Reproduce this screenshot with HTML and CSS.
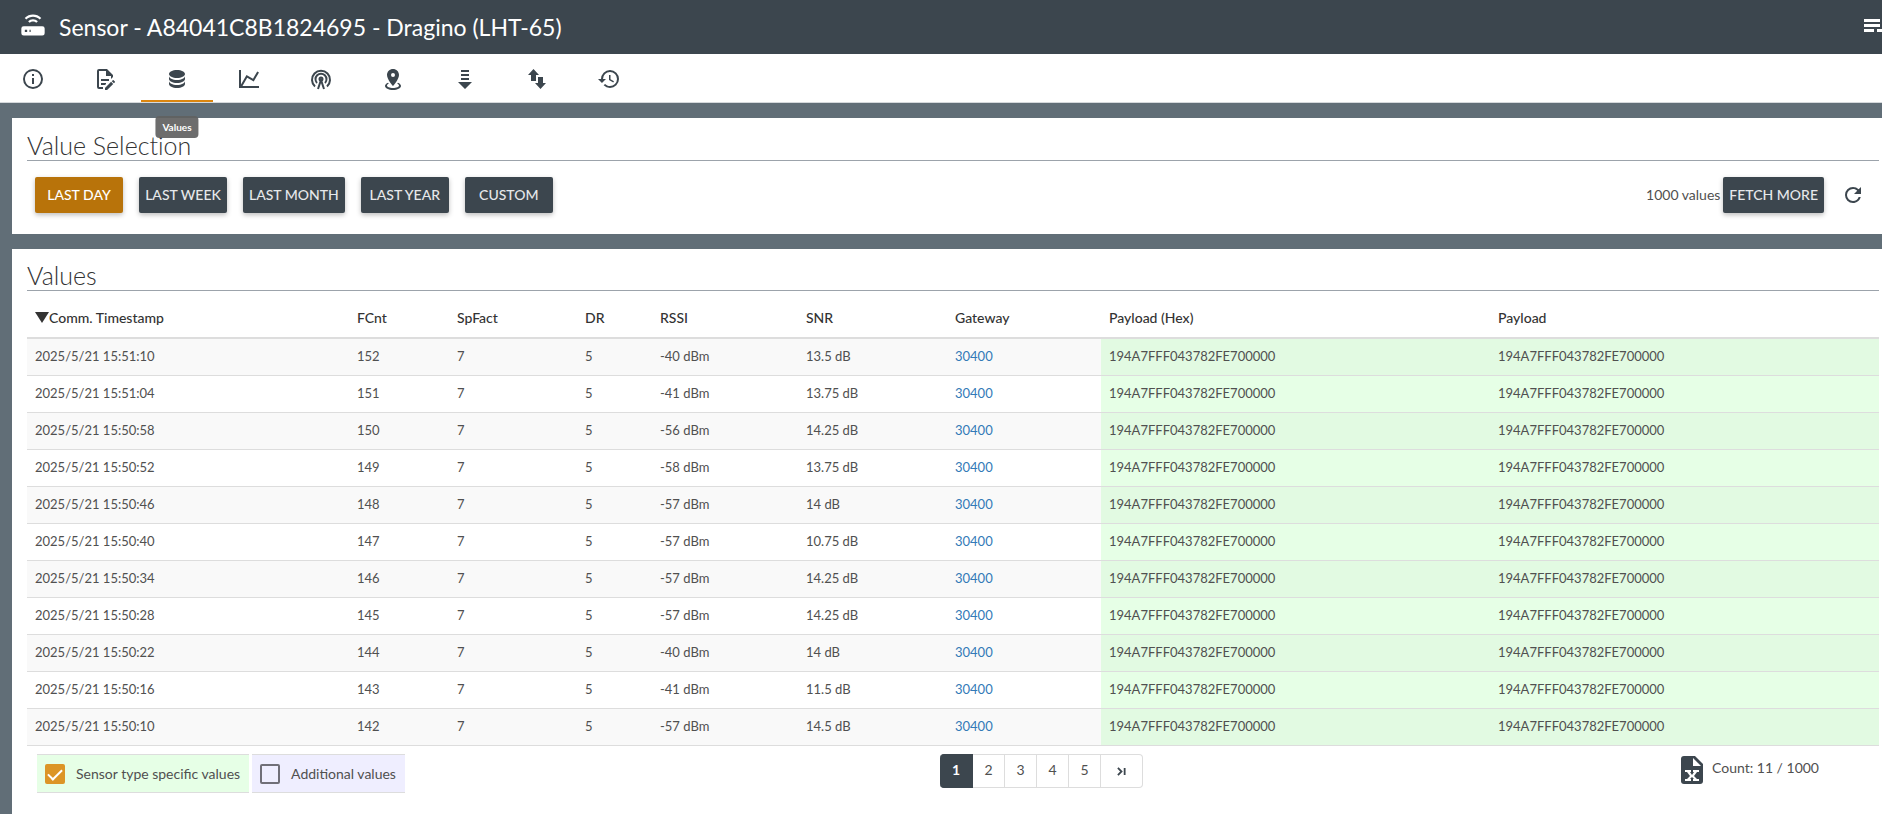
FILE: index.html
```html
<!DOCTYPE html>
<html lang="en">
<head>
<meta charset="utf-8">
<title>Sensor - A84041C8B1824695</title>
<link rel="stylesheet" href="styles.css">
</head>
<body>
<header class="topbar">
  <svg class="icon topbar-icon" viewBox="0 0 24 24"><path d="M4 13h16a2 2 0 0 1 2 2v4a2 2 0 0 1-2 2H4a2 2 0 0 1-2-2v-4a2 2 0 0 1 2-2m1 3v2h2v-2H5m4 0v2h1v-2H9M4.900 5.900C8.800 2 15.200 2 19.100 5.900l-1.400 1.400c-3.100-3.100-8.300-3.100-11.400 0L4.900 5.900m2.900 2.800c2.300-2.300 6.100-2.300 8.400 0l-1.400 1.400c-1.500-1.500-4.100-1.500-5.600 0L7.800 8.700z"/></svg>
  <h1 class="topbar-title">Sensor - A84041C8B1824695 - Dragino (LHT-65)</h1>
  <button class="topbar-menu" aria-label="Menu"><svg class="menu-icon" viewBox="0 0 18 14"><path d="M0 0h16v3H0zM0 5h16v3H0zM0 10h10v3H0zM13 10h5v3h-5z"/></svg></button>
</header>
<nav class="tabs">
  <button class="tab" aria-label="Info"><svg class="icon" viewBox="0 0 24 24"><path d="M11 9h2V7h-2m1 13c-4.410 0-8-3.590-8-8s3.590-8 8-8 8 3.590 8 8-3.590 8-8 8m0-18A10 10 0 0 0 2 12a10 10 0 0 0 10 10 10 10 0 0 0 10-10A10 10 0 0 0 12 2m-1 15h2v-6h-2v6z"/></svg></button>
  <button class="tab" aria-label="Edit"><svg class="icon" viewBox="0 0 24 24"><path d="M8 12h8v2H8v-2m2 8H6V4h7v5h5v3.100l2-2V8l-6-6H6a2 2 0 0 0-2 2v16a2 2 0 0 0 2 2h4v-2m-2-2h4.100l.9-.9V16H8v2m12.200-5c.1 0 .3.100.4.200l1.300 1.300c.2.200.2.600 0 .8l-1 1-2.100-2.100 1-1c.1-.1.200-.2.400-.2m0 3.900L14.100 23H12v-2.100l6.100-6.100 2.100 2.100z"/></svg></button>
  <button class="tab tab-active" aria-label="Values"><svg class="icon" viewBox="0 0 24 24"><path d="M12 3C7.580 3 4 4.790 4 7s3.580 4 8 4 8-1.790 8-4-3.580-4-8-4M4 9v3c0 2.210 3.580 4 8 4s8-1.790 8-4V9c0 2.210-3.580 4-8 4s-8-1.790-8-4m0 5v3c0 2.210 3.580 4 8 4s8-1.790 8-4v-3c0 2.210-3.580 4-8 4s-8-1.790-8-4z"/></svg><span class="tooltip">Values</span></button>
  <button class="tab" aria-label="Chart"><svg class="icon" viewBox="0 0 24 24"><path d="M16 11.780l4.240-7.330 1.730 1-5.230 9.050-6.510-3.750L5.460 19H22v2H2V3h2v14.540L9.500 8z"/></svg></button>
  <button class="tab" aria-label="Antenna"><svg class="icon icon-line" viewBox="0 0 24 24"><path d="M6 19.500a9 9 0 1 1 12 0M8 16a5.500 5.500 0 1 1 8 0M9 22l3-9 3 9"/><circle cx="12" cy="12" r="1.500"/></svg></button>
  <button class="tab" aria-label="Location"><svg class="icon" viewBox="0 0 24 24"><path d="M12 2c3.310 0 6 2.660 6 5.950C18 12.410 12 19 12 19S6 12.410 6 7.950C6 4.660 8.690 2 12 2m0 4a2 2 0 0 0-2 2 2 2 0 0 0 2 2 2 2 0 0 0 2-2 2 2 0 0 0-2-2m8 13c0 2.210-3.580 4-8 4s-8-1.790-8-4c0-1.290 1.220-2.440 3.110-3.170l.64.910C6.670 17.190 6 17.810 6 18.500c0 1.380 2.690 2.500 6 2.500s6-1.120 6-2.500c0-.69-.67-1.310-1.750-1.760l.64-.91C18.780 16.560 20 17.710 20 19z"/></svg></button>
  <button class="tab" aria-label="Downlink"><svg class="icon" viewBox="0 0 24 24"><path d="M8 3h8v2H8zM8 7h8v2H8zM8 11h8v2H8zM5 15h14l-7 7z"/></svg></button>
  <button class="tab" aria-label="Transfers"><svg class="icon" viewBox="0 0 24 24"><path d="M8.500 2l5.500 6h-3v6H6V8H3zM15.500 22L10 16h3v-6h5v6h3z"/></svg></button>
  <button class="tab" aria-label="History"><svg class="icon" viewBox="0 0 24 24"><path d="M13.500 8H12v5l4.280 2.540.72-1.210-3.500-2.080V8M13 3a9 9 0 0 0-9 9H1l3.960 4.030L9 12H6a7 7 0 0 1 7-7 7 7 0 0 1 7 7 7 7 0 0 1-7 7c-1.930 0-3.680-.79-4.940-2.060l-1.420 1.420A8.896 8.896 0 0 0 13 21a9 9 0 0 0 9-9 9 9 0 0 0-9-9"/></svg></button>
</nav>
<main class="content">
  <section class="panel">
    <h2 class="panel-title">Value Selection</h2>
    <div class="selection">
      <button class="btn btn-active">LAST DAY</button>
      <button class="btn">LAST WEEK</button>
      <button class="btn">LAST MONTH</button>
      <button class="btn">LAST YEAR</button>
      <button class="btn">CUSTOM</button>
      <div class="fetch">
        <span>1000 values</span>
        <button class="btn">FETCH MORE</button>
        <button class="refresh" aria-label="Refresh"><svg class="icon" viewBox="0 0 24 24"><path d="M17.650 6.350A7.958 7.958 0 0 0 12 4a8 8 0 0 0-8 8 8 8 0 0 0 8 8c3.730 0 6.840-2.550 7.730-6h-2.080A5.990 5.990 0 0 1 12 18a6 6 0 0 1-6-6 6 6 0 0 1 6-6c1.660 0 3.140.69 4.220 1.780L13 11h7V4l-2.350 2.350z"/></svg></button>
      </div>
    </div>
  </section>
  <section class="panel panel-values">
    <h2 class="panel-title">Values</h2>
    <table class="values">
      <colgroup><col class="c-time"><col class="c-fcnt"><col class="c-sf"><col class="c-dr"><col class="c-rssi"><col class="c-snr"><col class="c-gw"><col><col></colgroup>
      <thead><tr><th><span class="sort"></span>Comm. Timestamp</th><th>FCnt</th><th>SpFact</th><th>DR</th><th>RSSI</th><th>SNR</th><th>Gateway</th><th>Payload (Hex)</th><th>Payload</th></tr></thead>
      <tbody>
        <tr><td>2025/5/21 15:51:10</td><td>152</td><td>7</td><td>5</td><td>-40 dBm</td><td>13.5 dB</td><td><a href="#">30400</a></td><td>194A7FFF043782FE700000</td><td>194A7FFF043782FE700000</td></tr>
        <tr><td>2025/5/21 15:51:04</td><td>151</td><td>7</td><td>5</td><td>-41 dBm</td><td>13.75 dB</td><td><a href="#">30400</a></td><td>194A7FFF043782FE700000</td><td>194A7FFF043782FE700000</td></tr>
        <tr><td>2025/5/21 15:50:58</td><td>150</td><td>7</td><td>5</td><td>-56 dBm</td><td>14.25 dB</td><td><a href="#">30400</a></td><td>194A7FFF043782FE700000</td><td>194A7FFF043782FE700000</td></tr>
        <tr><td>2025/5/21 15:50:52</td><td>149</td><td>7</td><td>5</td><td>-58 dBm</td><td>13.75 dB</td><td><a href="#">30400</a></td><td>194A7FFF043782FE700000</td><td>194A7FFF043782FE700000</td></tr>
        <tr><td>2025/5/21 15:50:46</td><td>148</td><td>7</td><td>5</td><td>-57 dBm</td><td>14 dB</td><td><a href="#">30400</a></td><td>194A7FFF043782FE700000</td><td>194A7FFF043782FE700000</td></tr>
        <tr><td>2025/5/21 15:50:40</td><td>147</td><td>7</td><td>5</td><td>-57 dBm</td><td>10.75 dB</td><td><a href="#">30400</a></td><td>194A7FFF043782FE700000</td><td>194A7FFF043782FE700000</td></tr>
        <tr><td>2025/5/21 15:50:34</td><td>146</td><td>7</td><td>5</td><td>-57 dBm</td><td>14.25 dB</td><td><a href="#">30400</a></td><td>194A7FFF043782FE700000</td><td>194A7FFF043782FE700000</td></tr>
        <tr><td>2025/5/21 15:50:28</td><td>145</td><td>7</td><td>5</td><td>-57 dBm</td><td>14.25 dB</td><td><a href="#">30400</a></td><td>194A7FFF043782FE700000</td><td>194A7FFF043782FE700000</td></tr>
        <tr><td>2025/5/21 15:50:22</td><td>144</td><td>7</td><td>5</td><td>-40 dBm</td><td>14 dB</td><td><a href="#">30400</a></td><td>194A7FFF043782FE700000</td><td>194A7FFF043782FE700000</td></tr>
        <tr><td>2025/5/21 15:50:16</td><td>143</td><td>7</td><td>5</td><td>-41 dBm</td><td>11.5 dB</td><td><a href="#">30400</a></td><td>194A7FFF043782FE700000</td><td>194A7FFF043782FE700000</td></tr>
        <tr><td>2025/5/21 15:50:10</td><td>142</td><td>7</td><td>5</td><td>-57 dBm</td><td>14.5 dB</td><td><a href="#">30400</a></td><td>194A7FFF043782FE700000</td><td>194A7FFF043782FE700000</td></tr>
      </tbody>
    </table>
    <div class="table-footer">
      <div class="filters">
        <label class="filter filter-sensor"><input class="check" type="checkbox" checked>Sensor type specific values</label>
        <label class="filter filter-extra"><input class="check" type="checkbox">Additional values</label>
      </div>
      <div class="footer-right">
        <div class="pager">
          <button class="page page-active">1</button><button class="page">2</button><button class="page">3</button><button class="page">4</button><button class="page">5</button><button class="page page-last" aria-label="Last page"><svg class="last-icon" viewBox="0 0 10 10"><path d="M1 1l4 4-4 4M8.500 1v8"/></svg></button>
        </div>
        <div class="count">
          <svg class="file-icon" viewBox="0 0 22 28"><path d="M3 0h11l8 8v17a3 3 0 0 1-3 3H3a3 3 0 0 1-3-3V3a3 3 0 0 1 3-3z"/><path class="cut" d="M12 2v8h8zM4 14h6v2H9l2 3 2-3h-1v-2h6v2h-2l-3 4 3 3h2v2h-6v-2h1l-2-2-2 2h1v2H4v-2h2l3-3-3-4H4z"/></svg>
          <span>Count: 11 / 1000</span>
        </div>
      </div>
    </div>
  </section>
</main>
</body>
</html>
```
FILE: styles.css
```css
* { box-sizing: border-box; }
body {
  margin: 0;
  min-height: 100vh;
  display: flex;
  flex-direction: column;
  background: #616e77;
  color: #505050;
  font: 14px/20px Lato, "Open Sans", sans-serif;
  overflow-x: hidden;
}
button { font: inherit; border: 0; margin: 0; padding: 0; background: none; color: inherit; cursor: pointer; }
.icon { width: 24px; height: 24px; fill: #3c464e; display: block; flex: none; }
.topbar { display: flex; align-items: center; height: 54px; padding-left: 19px; background: #3c464e; color: #fff; }
.topbar-icon { width: 28px; height: 28px; margin-bottom: 4px; fill: #fff; }
.topbar-title { margin: 0 0 0 12px; font-size: 23px; line-height: 32px; font-weight: 400; }
.topbar-menu { margin-left: auto; margin-bottom: 2px; }
.menu-icon { display: block; width: 18px; height: 14px; fill: #fff; }
.tabs { display: flex; height: 49px; background: #fff; border-bottom: 1px solid #d5d9dc; }
.tab { position: relative; width: 72px; display: flex; align-items: center; justify-content: center; padding-top: 4px; border-bottom: 2px solid transparent; flex: none; }
.tab:first-child { width: 69px; padding-right: 3px; }
.tab-active { border-color: #dc860f; }
.icon-line { fill: none; stroke: #3c464e; stroke-width: 2; }
.tooltip { position: absolute; top: 62px; left: 50%; transform: translateX(-50%); padding: 0 7px; background: rgba(97, 97, 97, .92); color: #fff; border-radius: 4px; font-size: 10px; line-height: 22px; font-weight: 700; }
.content { flex: 1; display: flex; flex-direction: column; gap: 15px; padding: 15px 0 0 12px; }
.panel { background: #fff; padding: 12px 3px 21px 15px; }
.panel-values { flex: 1; padding-top: 11px; }
.panel-title { margin: 0; font-size: 25px; line-height: 30px; font-weight: 300; color: #333; border-bottom: 1px solid #9ca3ab; font-variant-ligatures: none; }
.selection { display: flex; align-items: center; gap: 16px; padding: 16px 14px 0 8px; }
.btn { min-width: 88px; height: 36px; padding: 0 6px 1px; border-radius: 2px; background: #3c464e; color: #e6e8ea; font-weight: 500; white-space: nowrap; box-shadow: 0 2px 5px rgba(0, 0, 0, .26); }
.btn-active { background: #b8730a; color: #fff; }
.fetch { display: flex; align-items: center; gap: 3px; margin-left: auto; }
.refresh { margin-left: 14px; }
.values { width: 100%; table-layout: fixed; border-collapse: separate; border-spacing: 0; }
.values th { height: 48px; padding: 15px 8px 8px; text-align: left; font-weight: 500; color: #333; border-bottom: 2px solid #ddd; }
.values td { height: 37px; padding: 7px 8px 9px; font-size: 13px; border-bottom: 1px solid #ddd; }
.values tbody tr:nth-child(odd) { background: #f9f9f9; }
.values td:nth-child(n+8) { background: #e6ffe6; }
.values tbody tr:nth-child(odd) td:nth-child(n+8) { background: #e2fae2; }
.values a { color: #337ab7; text-decoration: none; }
.c-time { width: 322px; }
.c-fcnt { width: 100px; }
.c-sf { width: 128px; }
.c-dr { width: 75px; }
.c-rssi { width: 146px; }
.c-snr { width: 149px; }
.c-gw { width: 154px; }
.sort { display: inline-block; border: 7px solid transparent; border-top: 11px solid #333; border-bottom: 0; }
.table-footer { display: grid; grid-template-columns: 1fr 1fr; align-items: start; padding: 8px 36px 0 10px; }
.footer-right { display: flex; align-items: flex-start; justify-content: space-between; padding-right: 24px; }
.filters { display: flex; gap: 3px; }
.filter { display: flex; align-items: center; gap: 11px; height: 39px; padding: 0 9px 0 8px; border: 1px solid #ddd; border-width: 1px 0; white-space: nowrap; }
.filter-sensor { background: #e6ffe6; }
.filter-extra { background: #efeeff; }
.check { appearance: none; width: 20px; height: 20px; margin: 0; border: 2px solid #706f78; border-radius: 2px; display: grid; place-items: center; }
.check:checked { background: #dc9526; border-color: #dc9526; }
.check:checked::before { content: ""; width: 6px; height: 12px; margin-bottom: 4px; border: solid #fff; border-width: 0 2px 2px 0; transform: rotate(45deg); }
.pager { display: flex; }
.page { min-width: 32px; height: 34px; border: 1px solid #ddd; border-left: 0; color: #505050; padding-bottom: 2px; }
.page-active { width: 33px; background: #3c464e; border-color: #3c464e; color: #fff; font-weight: 700; border-radius: 4px 0 0 4px; }
.page-last { width: 42px; border-radius: 0 4px 4px 0; display: grid; place-items: center; padding-top: 3px; }
.last-icon { width: 9px; height: 9px; fill: none; stroke: #3c464e; stroke-width: 2; display: block; }
.count { display: flex; align-items: flex-start; gap: 9px; padding-top: 2px; line-height: 24px; }
.file-icon { width: 22px; height: 28px; fill: #3c464e; }
.cut { fill: #fff; }
```
